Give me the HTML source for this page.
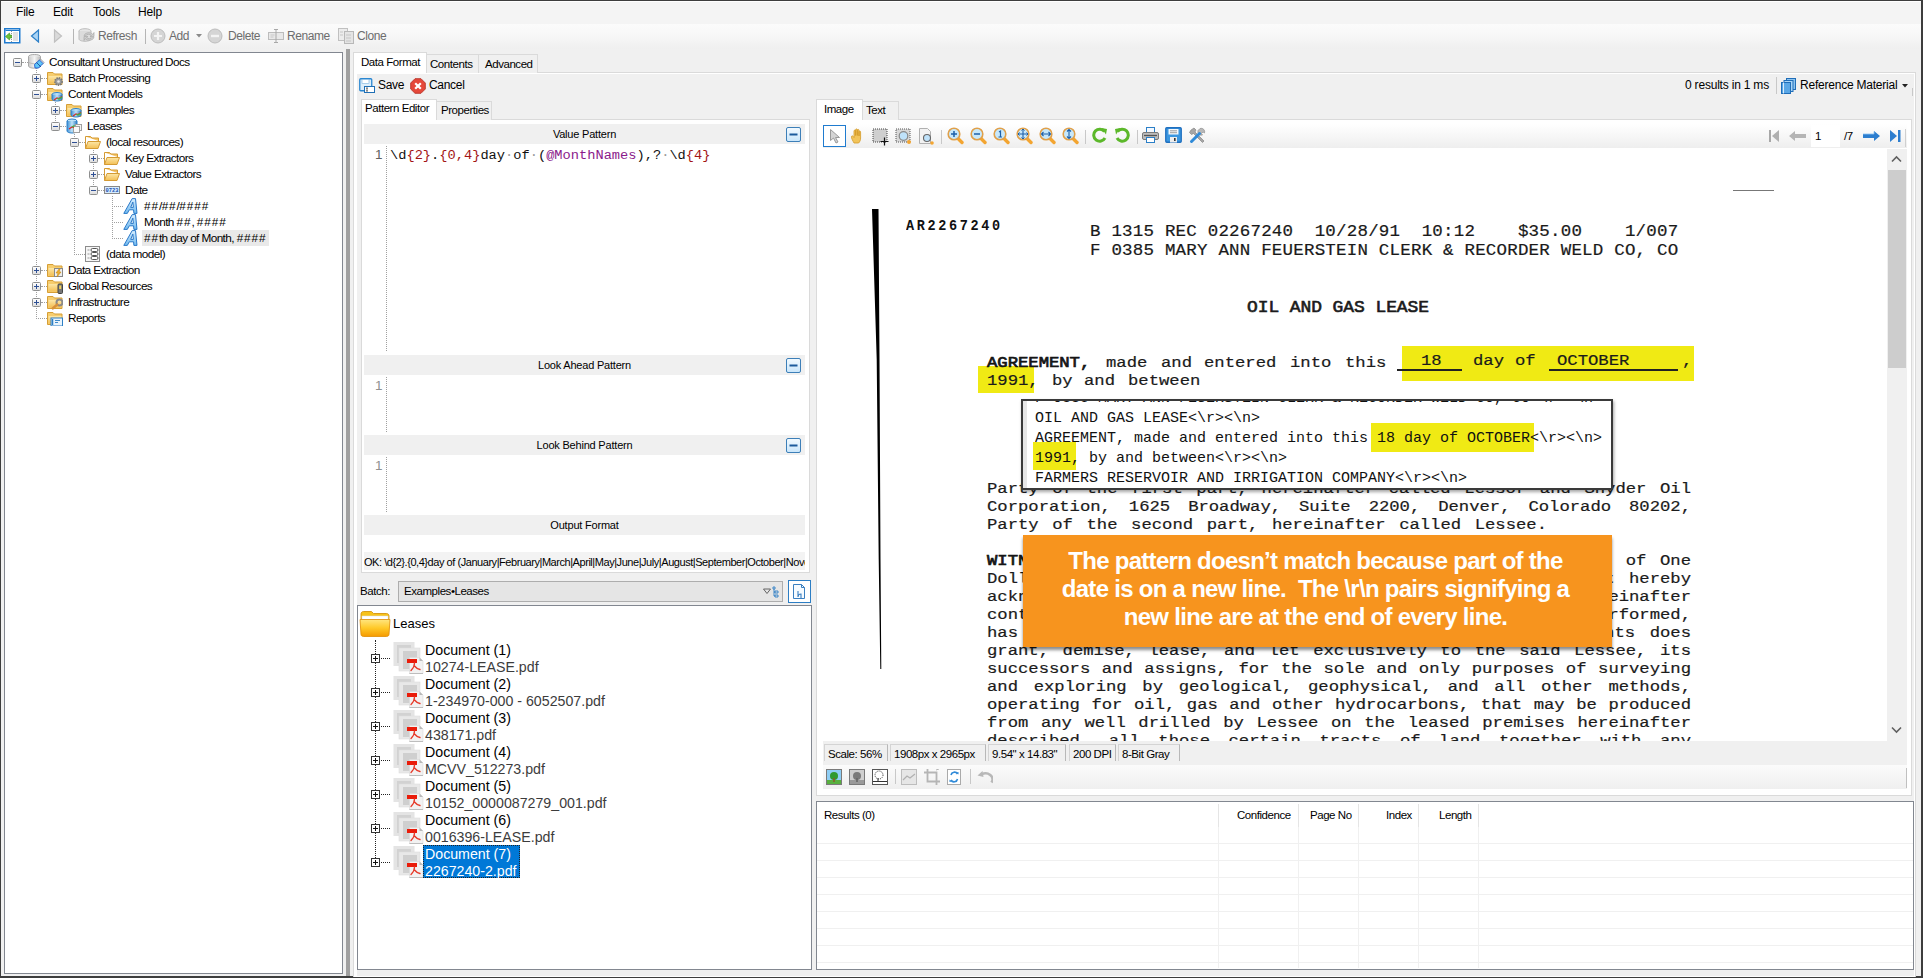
<!DOCTYPE html><html><head><meta charset="utf-8"><style>
*{box-sizing:border-box;margin:0;padding:0}
html,body{width:1923px;height:978px;overflow:hidden;background:#f0f0f0;font-family:"Liberation Sans",sans-serif;font-size:11px;color:#000}
.a{position:absolute}
.t{position:absolute;white-space:nowrap;line-height:14px}
.menu{font-size:12px;letter-spacing:-0.2px}
.tbt{font-size:12px;color:#6d6d6d;letter-spacing:-0.45px}
.ui{font-size:11.5px;letter-spacing:-0.45px}
.tree{font-size:11.8px;letter-spacing:-0.6px}
.hdr{position:absolute;background:#f0f0f0;text-align:center;font-size:11px;line-height:20px;letter-spacing:-0.2px}
.mono{font-family:"Liberation Mono",monospace}
.vd{position:absolute;width:1px;border-left:1px dotted #a0a0a0}
.hd{position:absolute;height:1px;border-top:1px dotted #a0a0a0}
.doc{font-family:"Liberation Mono",monospace;font-size:17.5px;line-height:18px;color:#111;font-weight:bold;position:absolute;white-space:nowrap;-webkit-text-stroke:0px}
b2{-webkit-text-stroke:0.7px #111}
.docl{position:absolute;font-family:"Liberation Mono",monospace;font-size:17.5px;line-height:18px;color:#1a1a1a;font-weight:bold;text-align:justify;text-align-last:justify;white-space:normal;height:18px;overflow:visible}
</style></head><body>

<svg width="0" height="0" style="position:absolute">
<defs>
<linearGradient id="gbox" x1="0" y1="0" x2="0" y2="1"><stop offset="0" stop-color="#ffffff"/><stop offset="1" stop-color="#dcdcdc"/></linearGradient>
<linearGradient id="gfold" x1="0" y1="0" x2="0" y2="1"><stop offset="0" stop-color="#fde7a6"/><stop offset="1" stop-color="#f3bf55"/></linearGradient>
<linearGradient id="gdb" x1="0" y1="0" x2="1" y2="0"><stop offset="0" stop-color="#c8c8c8"/><stop offset=".5" stop-color="#f4f4f4"/><stop offset="1" stop-color="#b8b8b8"/></linearGradient>
<linearGradient id="gbdb" x1="0" y1="0" x2="1" y2="0"><stop offset="0" stop-color="#3d8fd6"/><stop offset=".5" stop-color="#bfe3f8"/><stop offset="1" stop-color="#2c7cc4"/></linearGradient>
<symbol id="i-fold" viewBox="0 0 16 16"><path d="M0.5 2.5h5.5l1.5 1.5h7.5v10.5h-14.5z" fill="#f6cd6e" stroke="#d69e35"/><path d="M1.5 6h13v7.5h-13z" fill="url(#gfold)"/></symbol>
<symbol id="i-fopen" viewBox="0 0 16 16"><path d="M0.5 2.5h5l1.5 1.5h6.5v3" fill="#f5c466" stroke="#d49b34"/><path d="M0.5 14.5V2.5" stroke="#d49b34"/><path d="M0.5 14.5L3 7.5h12.5l-2.5 7z" fill="url(#gfold)" stroke="#d49b34"/></symbol>
<symbol id="i-db" viewBox="0 0 18 18"><ellipse cx="6.5" cy="2.5" rx="6" ry="2" fill="#eaeaea" stroke="#a8a8a8"/><path d="M.5 2.5v9.5c0 1.2 2.7 2.2 6 2.2s6-1 6-2.2V2.5" fill="url(#gdb)" stroke="#a8a8a8"/><path d="M.5 7.5c0 1.2 2.7 2.2 6 2.2s6-1 6-2.2" fill="none" stroke="#b8b8b8"/><path d="M10.5 7l2-2 3.5 3.5-2 2z" fill="#e0e0e0" stroke="#8a8a8a" stroke-width=".8"/><path d="M6.5 10.5l5-4.5 3.5 3.5-4.5 4.5H7z" fill="#5fc6f7" stroke="#1f58d0" stroke-width=".9"/><path d="M8.5 8.5l4.5 4.5" stroke="#1d4a9a" stroke-width=".9"/></symbol>
<symbol id="i-fgear" viewBox="0 0 16 16"><use href="#i-fold"/><circle cx="11.5" cy="11.5" r="3.6" fill="#9b9b9b" stroke="#777" stroke-dasharray="1.5 .9" stroke-width="1.6"/><circle cx="11.5" cy="11.5" r="1.3" fill="#e8e8e8"/></symbol>
<symbol id="i-fdb" viewBox="0 0 16 16"><use href="#i-fold"/><ellipse cx="10" cy="8.5" rx="5" ry="2" fill="#bfe3f8" stroke="#2b7fc7"/><path d="M5 8.5v4.5c0 1.2 2.2 2 5 2s5-.8 5-2v-4.5" fill="url(#gbdb)" stroke="#2b7fc7"/><path d="M7 14l3-2 2 .5 3-2" stroke="#d62c2c" stroke-width="1.2" fill="none"/><path d="M10 12.5l2 .5 3-2" stroke="#3fb33f" stroke-width="1.2" fill="none"/></symbol>
<symbol id="i-leases" viewBox="0 0 16 16"><ellipse cx="6" cy="3" rx="5" ry="2" fill="#bfe3f8" stroke="#2b7fc7"/><path d="M1 3v10c0 1.2 2.2 2 5 2s5-.8 5-2V3" fill="url(#gbdb)" stroke="#2b7fc7"/><rect x="9.5" y="6.5" width="6" height="6" fill="#f4f4f4" stroke="#a0a0a0"/><rect x="7.5" y="8.5" width="6" height="6" fill="#fafafa" stroke="#a0a0a0"/><path d="M3 11l3-2 2 .5" stroke="#d62c2c" stroke-width="1.2" fill="none"/><path d="M6 9l2.5-1.5" stroke="#3fb33f" stroke-width="1.2" fill="none"/></symbol>
<symbol id="i-date" viewBox="0 0 16 8"><rect x=".5" y=".5" width="15" height="7" fill="#d6ecff" stroke="#888"/><text x="8" y="6.3" font-family="Liberation Mono" font-size="6" font-weight="bold" fill="#1a4fb0" text-anchor="middle" textLength="13" lengthAdjust="spacingAndGlyphs">0723</text></symbol>
<linearGradient id="gA" x1="0" y1="0" x2="0" y2="1"><stop offset="0" stop-color="#d9efff"/><stop offset="1" stop-color="#6fb9ef"/></linearGradient><symbol id="i-A" viewBox="0 0 16 16"><path d="M.8 15.4L9.2.6h3.3l1.5 14.8h-3.1l-.35-3.6H6.3l-2 3.6z M7.7 9.4h2.7l-.55-5.3z" fill="url(#gA)" stroke="#2a78c8" stroke-width="1" fill-rule="evenodd" stroke-linejoin="round"/></symbol>
<symbol id="i-dm" viewBox="0 0 16 16"><rect x=".5" y=".5" width="14" height="15" fill="#f6f6f6" stroke="#8c8c8c"/><path d="M2.5 4h2M2.5 8h2M2.5 12h2" stroke="#999"/><rect x="6" y="2.5" width="7" height="3" rx="1.5" fill="#fff" stroke="#555"/><rect x="6" y="6.5" width="7" height="3" rx="1.5" fill="#fff" stroke="#555"/><rect x="6" y="10.5" width="7" height="3" rx="1.5" fill="#fff" stroke="#555"/></symbol>
<symbol id="i-flight" viewBox="0 0 16 16"><use href="#i-fold"/><rect x="7.5" y="6.5" width="8" height="8" fill="#eee" stroke="#888"/><path d="M12 7l-3 4h2l-1 4 4-5h-2l1-3z" fill="#f0b030" stroke="#c78a10" stroke-width=".6"/></symbol>
<symbol id="i-flock" viewBox="0 0 16 16"><use href="#i-fold"/><rect x="11" y="6" width="4.5" height="9.5" rx="1" fill="#777" stroke="#444"/><rect x="12.2" y="7.5" width="2" height="3.5" fill="#f3d35a"/></symbol>
<symbol id="i-fwrench" viewBox="0 0 16 16"><use href="#i-fold"/><circle cx="12.5" cy="8.5" r="3" fill="none" stroke="#8a8a8a" stroke-width="2"/><path d="M11 10l-6 5" stroke="#d9913a" stroke-width="2.4"/></symbol>
<symbol id="i-frep" viewBox="0 0 16 16"><use href="#i-fold"/><rect x="4" y="8" width="11.5" height="8" fill="#e9f4fc" stroke="#2d7fc5"/><path d="M5.5 9v6" stroke="#2d7fc5" stroke-width="1.5"/><path d="M8 10.5h5M8 12.5h3" stroke="#2d7fc5" stroke-width=".9"/></symbol>
<symbol id="i-minus" viewBox="0 0 9 9"><rect x=".5" y=".5" width="8" height="8" rx="1" fill="url(#gbox)" stroke="#8e8f8f"/><path d="M2 4.5h5" stroke="#2e4f94"/></symbol>
<symbol id="i-plus" viewBox="0 0 9 9"><rect x=".5" y=".5" width="8" height="8" rx="1" fill="url(#gbox)" stroke="#8e8f8f"/><path d="M2 4.5h5M4.5 2v5" stroke="#2e4f94"/></symbol>
<symbol id="i-docpdf" viewBox="0 0 31 33"><rect x="0.5" y="1" width="21" height="24" fill="#e4e4e4"/><rect x="4" y="4" width="14" height="18" fill="#d2d2d2"/><rect x="6" y="7" width="21" height="23" fill="#e8e8e8" stroke="#dcdcdc" stroke-width=".6"/><rect x="10" y="10" width="14" height="18" fill="#cfcfcf"/><path d="M16.5 16.5h10l3.5 3.5v12.5h-13.5z" fill="#f2f2f2" stroke="#d8d8d8" stroke-width=".6"/><path d="M26.5 16.5v3.5h3.5z" fill="#b8b8b8"/><path d="M16.5 32.5h13.5" stroke="#bdbdbd"/><rect x="14" y="18" width="10" height="4" fill="#ea1c0a"/><path d="M21.5 22c0 3-1.5 5.5-3.5 7.5M21.5 25c1.5 2 3.5 3 5.5 3.5" stroke="#e63a2a" stroke-width="1.3" fill="none" stroke-linecap="round"/></symbol>
<linearGradient id="gbf" x1="0" y1="0" x2="0" y2="1"><stop offset="0" stop-color="#ffe680"/><stop offset=".5" stop-color="#ffc928"/><stop offset="1" stop-color="#f59a00"/></linearGradient><symbol id="i-bigfolder" viewBox="0 0 32 28"><path d="M2 4c0-1.5 1-2.5 2.5-2.5h8l2 2h13c1.5 0 2.5 1 2.5 2.5v3H2z" fill="#f7c21a" stroke="#d08a00" stroke-width=".8"/><rect x="3" y="6" width="26" height="4" fill="#fff" stroke="#ddd" stroke-width=".5"/><path d="M1 9.5h30l-1 15c0 1-1 2-2.5 2h-23c-1.5 0-2.5-1-2.5-2z" fill="url(#gbf)" stroke="#e08c00" stroke-width=".8"/></symbol>
</defs></svg>

<div class="a" style="left:0px;top:0px;width:1923px;height:1px;background:#3d3d3d"></div>
<div class="a" style="left:0px;top:0px;width:1px;height:978px;background:#3d3d3d"></div>
<div class="a" style="left:1921px;top:0px;width:2px;height:978px;background:#3d3d3d"></div>
<div class="a" style="left:0px;top:976px;width:1923px;height:2px;background:#3d3d3d"></div>
<div class="a" style="left:1px;top:1px;width:1920px;height:23px;background:#f4f4f4;border-top:1px solid #fff"></div>
<div class="t menu" style="left:16px;top:5px;">File</div>
<div class="t menu" style="left:53px;top:5px;">Edit</div>
<div class="t menu" style="left:93px;top:5px;">Tools</div>
<div class="t menu" style="left:138px;top:5px;">Help</div>
<div class="a" style="left:1px;top:24px;width:1920px;height:25px;background:linear-gradient(#fbfbfb,#f8f8f8 40%,#f2f2f2 80%,#efefef)"></div>
<div class="t tbt" style="left:98px;top:29px;">Refresh</div>
<div class="t tbt" style="left:169px;top:29px;">Add</div>
<div class="t tbt" style="left:228px;top:29px;">Delete</div>
<div class="t tbt" style="left:287px;top:29px;">Rename</div>
<div class="t tbt" style="left:357px;top:29px;">Clone</div>
<div class="a" style="left:73px;top:29px;width:1px;height:15px;background:#b5b5b5"></div>
<div class="a" style="left:145px;top:29px;width:1px;height:15px;background:#b5b5b5"></div>
<svg class="a" style="left:4px;top:28px" width="17" height="16"><rect x=".75" y=".75" width="15" height="14" fill="#fff" stroke="#1f7bcf" stroke-width="1.5"/><path d="M1.5 2.5h14" stroke="#1f7bcf"/><path d="M7.5 3v11" stroke="#999" stroke-dasharray="1 1"/><rect x="9" y="4" width="5" height="9" fill="#e2e2e2"/><path d="M1.5 8.5l4-3.5v2h2v3h-2v2z" fill="#6cc43a" stroke="#3a8f1a" stroke-width=".6"/></svg>
<svg class="a" style="left:30px;top:29px" width="10" height="14"><path d="M8.5 1v12L1.5 7z" fill="#aad4f5" stroke="#2c7fc7" stroke-width="1.2"/></svg>
<svg class="a" style="left:53px;top:29px" width="10" height="14"><path d="M1.5 1v12L8.5 7z" fill="#dadada" stroke="#c0c0c0" stroke-width="1.2"/></svg>
<svg class="a" style="left:78px;top:28px" width="17" height="15"><ellipse cx="7" cy="3" rx="6" ry="2.3" fill="#e6e6e6" stroke="#bdbdbd"/><path d="M1 3v8c0 1.3 2.7 2.3 6 2.3s6-1 6-2.3V3" fill="#dcdcdc" stroke="#bdbdbd"/><path d="M6 7.5a5 4 0 0 1 9-1l1-2v4h-4l1.5-1a3.5 3 0 0 0-6 .5zM16 9.5a5 4 0 0 1-9 1l-1 2v-4h4l-1.5 1a3.5 3 0 0 0 6-.5z" fill="#cfcfcf" stroke="#aaa" stroke-width=".7"/></svg>
<svg class="a" style="left:150px;top:28px" width="16" height="16"><circle cx="8" cy="8" r="7" fill="#d5d5d5" stroke="#bdbdbd"/><path d="M8 4v8M4 8h8" stroke="#f4f4f4" stroke-width="2.2"/></svg>
<svg class="a" style="left:196px;top:34px" width="7" height="4"><path d="M0 0h6l-3 3.5z" fill="#8a8a8a"/></svg>
<svg class="a" style="left:207px;top:28px" width="16" height="16"><circle cx="8" cy="8" r="7" fill="#d5d5d5" stroke="#bdbdbd"/><path d="M4 8h8" stroke="#f4f4f4" stroke-width="2.4"/></svg>
<svg class="a" style="left:268px;top:29px" width="16" height="14"><rect x=".5" y="3.5" width="15" height="7" fill="#e8e8e8" stroke="#bcbcbc"/><path d="M8 .5v13M6 .5h4M6 13.5h4" stroke="#a8a8a8"/><path d="M2.5 6h4M2.5 8h3" stroke="#c8c8c8"/></svg>
<svg class="a" style="left:338px;top:28px" width="16" height="16"><rect x=".5" y=".5" width="9" height="12" fill="#ececec" stroke="#c0c0c0"/><rect x="6.5" y="3.5" width="9" height="12" fill="#e4e4e4" stroke="#b8b8b8"/><path d="M2 4h3M2 7h3M8 7h5M8 10h5M8 13h5" stroke="#c6c6c6"/></svg>
<div class="a" style="left:4px;top:52px;width:339px;height:922px;background:#fff;border:1px solid #828790"></div>
<div class="a" style="left:346px;top:49px;width:4px;height:927px;background:#a0a0a0"></div>
<div class="a" style="left:353px;top:72px;width:1563px;height:905px;background:#fff;border:1px solid #dadada;border-bottom:none"></div>
<div class="a" style="left:353px;top:52px;width:74px;height:21px;background:#fff;border:1px solid #dadada;border-bottom:none"></div>
<div class="a" style="left:426px;top:54px;width:53px;height:19px;background:#f0f0f0;border:1px solid #dadada;border-bottom:none"></div>
<div class="a" style="left:478px;top:54px;width:60px;height:19px;background:#f0f0f0;border:1px solid #dadada;border-bottom:none"></div>
<div class="a" style="left:354px;top:72px;width:72px;height:2px;background:#fff"></div>
<div class="t ui" style="left:361px;top:55px;">Data Format</div>
<div class="t ui" style="left:430px;top:57px;">Contents</div>
<div class="t ui" style="left:485px;top:57px;">Advanced</div>
<div class="a" style="left:357px;top:74px;width:1557px;height:902px;background:#f0f0f0"></div>
<svg class="a" style="left:359px;top:78px" width="16" height="15"><rect x=".75" y=".75" width="12" height="12" rx="1" fill="#ddeefa" stroke="#2b87d1" stroke-width="1.3"/><rect x="3" y="1.5" width="7" height="4" fill="#fff" stroke="#7bb2e0" stroke-width=".6"/><rect x="5.5" y="8.5" width="10" height="6" fill="#fff" stroke="#1f6fb5"/><path d="M8 10v3M7 10h2M7 13h2" stroke="#333" stroke-width=".7"/></svg>
<div class="t ui" style="left:378px;top:78px;font-size:12px;letter-spacing:-0.3px">Save</div>
<svg class="a" style="left:410px;top:78px" width="16" height="16"><path d="M5 .7h6l4.3 4.3v6L11 15.3H5L.7 11V5z" fill="#e5483a" stroke="#b8342a" stroke-width=".9"/><path d="M5.2 5.2l5.6 5.6M10.8 5.2l-5.6 5.6" stroke="#fff" stroke-width="2.2"/></svg>
<div class="t ui" style="left:429px;top:78px;font-size:12px;letter-spacing:-0.3px">Cancel</div>
<div class="a" style="left:361px;top:119px;width:449px;height:454px;background:#fff;border:1px solid #dadada"></div>
<div class="a" style="left:361px;top:99px;width:76px;height:21px;background:#fff;border:1px solid #dadada;border-bottom:none"></div>
<div class="a" style="left:436px;top:101px;width:56px;height:19px;background:#f0f0f0;border:1px solid #dadada;border-bottom:none"></div>
<div class="a" style="left:362px;top:118px;width:74px;height:2px;background:#fff"></div>
<div class="t ui" style="left:365px;top:101px;">Pattern Editor</div>
<div class="t ui" style="left:441px;top:103px;">Properties</div>
<div class="hdr" style="left:364px;top:124px;width:441px;height:20px">Value Pattern</div>
<svg class="a" style="left:786px;top:127px" width="15" height="15"><defs><linearGradient id="gc786127" x1="0" y1="0" x2="0" y2="1"><stop offset="0" stop-color="#f3faff"/><stop offset="1" stop-color="#c9e6fb"/></linearGradient></defs><rect x=".5" y=".5" width="14" height="14" rx="1.5" fill="url(#gc786127)" stroke="#3d7fb8"/><path d="M3.5 7.5h8" stroke="#1c5b9c" stroke-width="2"/></svg>
<div class="hdr" style="left:364px;top:355px;width:441px;height:20px">Look Ahead Pattern</div>
<svg class="a" style="left:786px;top:358px" width="15" height="15"><defs><linearGradient id="gc786358" x1="0" y1="0" x2="0" y2="1"><stop offset="0" stop-color="#f3faff"/><stop offset="1" stop-color="#c9e6fb"/></linearGradient></defs><rect x=".5" y=".5" width="14" height="14" rx="1.5" fill="url(#gc786358)" stroke="#3d7fb8"/><path d="M3.5 7.5h8" stroke="#1c5b9c" stroke-width="2"/></svg>
<div class="hdr" style="left:364px;top:435px;width:441px;height:20px">Look Behind Pattern</div>
<svg class="a" style="left:786px;top:438px" width="15" height="15"><defs><linearGradient id="gc786438" x1="0" y1="0" x2="0" y2="1"><stop offset="0" stop-color="#f3faff"/><stop offset="1" stop-color="#c9e6fb"/></linearGradient></defs><rect x=".5" y=".5" width="14" height="14" rx="1.5" fill="url(#gc786438)" stroke="#3d7fb8"/><path d="M3.5 7.5h8" stroke="#1c5b9c" stroke-width="2"/></svg>
<div class="hdr" style="left:364px;top:515px;width:441px;height:20px">Output Format</div>
<div class="vd" style="left:386px;top:146px;height:205px"></div>
<div class="vd" style="left:386px;top:377px;height:55px"></div>
<div class="vd" style="left:386px;top:457px;height:55px"></div>
<div class="t" style="left:375px;top:147px;font-size:13.5px;line-height:16px;color:#606060">1</div>
<div class="t" style="left:375px;top:378px;font-size:13.5px;line-height:16px;color:#909090">1</div>
<div class="t" style="left:375px;top:458px;font-size:13.5px;line-height:16px;color:#909090">1</div>
<div class="t mono" style="left:390px;top:148px;font-size:13.7px;line-height:16px;color:#111">\d<span style="color:#a31515">{2}</span>.<span style="color:#a31515">{0,4}</span>day<span style="color:#9a9a9a">·</span>of<span style="color:#9a9a9a">·</span>(<span style="color:#8b1a8b">@MonthNames</span>),?<span style="color:#9a9a9a">·</span>\d<span style="color:#a31515">{4}</span></div>
<div class="a" style="left:364px;top:552px;width:441px;height:18px;background:#f3f3f3"></div>
<div class="t" style="left:364px;top:555px;font-size:11px;letter-spacing:-0.45px;width:441px;overflow:hidden">OK: \d{2}.{0,4}day of (January|February|March|April|May|June|July|August|September|October|November|December),?\s\d{4}</div>
<div class="t ui" style="left:360px;top:584px;">Batch:</div>
<div class="a" style="left:398px;top:581px;width:385px;height:21px;background:#e5e5e5;border:1px solid #adadad"></div>
<div class="t ui" style="left:404px;top:584px;">Examples•Leases</div>
<svg class="a" style="left:763px;top:586px" width="18" height="12"><path d="M.5 3h7l-3.5 4.5z" fill="none" stroke="#555" stroke-width=".9"/><path d="M10 1h2v2h-2zM12 5h3v2h-3zM12 9h3v2h-3zM11 3v7h1M11 6h1" fill="none" stroke="#2d7ec4" stroke-width=".9"/></svg>
<div class="a" style="left:788px;top:580px;width:23px;height:23px;background:#fff;border:1px solid #2d7ec4"></div>
<svg class="a" style="left:792px;top:583px" width="15" height="17"><path d="M1.5 1.5h8l3 3v11h-11z" fill="#f6fbff" stroke="#3a7fc0"/><path d="M9.5 1.5v3h3" fill="none" stroke="#3a7fc0"/><path d="M6 8v6M6 14c0-2 1-3 3-3v4" fill="none" stroke="#3a7fc0" stroke-width="1.1"/></svg>
<div class="a" style="left:357px;top:605px;width:455px;height:365px;background:#fff;border:1px solid #828790"></div>
<svg class="a" style="left:359px;top:610px" width="32" height="28"><use href="#i-bigfolder"/></svg>
<div class="t" style="left:393px;top:617px;font-size:13px;color:#000;letter-spacing:0px">Leases</div>
<div class="vd" style="left:375px;top:640px;height:222px;border-left-color:#222"></div>
<svg class="a" style="left:371px;top:654px" width="9" height="9"><rect x=".5" y=".5" width="8" height="8" fill="#fff" stroke="#333"/><path d="M2 4.5h5M4.5 2v5" stroke="#111"/></svg>
<div class="hd" style="left:381px;top:658px;width:9px;border-top-color:#222"></div>
<svg class="a" style="left:393px;top:641px" width="31" height="33"><use href="#i-docpdf"/></svg>
<div class="t" style="left:425px;top:642px;font-size:14.2px;line-height:17px;color:#000">Document (1)</div>
<div class="t" style="left:425px;top:659px;font-size:14.2px;line-height:17px;color:#3c3c3c">10274-LEASE.pdf</div>
<svg class="a" style="left:371px;top:688px" width="9" height="9"><rect x=".5" y=".5" width="8" height="8" fill="#fff" stroke="#333"/><path d="M2 4.5h5M4.5 2v5" stroke="#111"/></svg>
<div class="hd" style="left:381px;top:692px;width:9px;border-top-color:#222"></div>
<svg class="a" style="left:393px;top:675px" width="31" height="33"><use href="#i-docpdf"/></svg>
<div class="t" style="left:425px;top:676px;font-size:14.2px;line-height:17px;color:#000">Document (2)</div>
<div class="t" style="left:425px;top:693px;font-size:14.2px;line-height:17px;color:#3c3c3c">1-234970-000 - 6052507.pdf</div>
<svg class="a" style="left:371px;top:722px" width="9" height="9"><rect x=".5" y=".5" width="8" height="8" fill="#fff" stroke="#333"/><path d="M2 4.5h5M4.5 2v5" stroke="#111"/></svg>
<div class="hd" style="left:381px;top:726px;width:9px;border-top-color:#222"></div>
<svg class="a" style="left:393px;top:709px" width="31" height="33"><use href="#i-docpdf"/></svg>
<div class="t" style="left:425px;top:710px;font-size:14.2px;line-height:17px;color:#000">Document (3)</div>
<div class="t" style="left:425px;top:727px;font-size:14.2px;line-height:17px;color:#3c3c3c">438171.pdf</div>
<svg class="a" style="left:371px;top:756px" width="9" height="9"><rect x=".5" y=".5" width="8" height="8" fill="#fff" stroke="#333"/><path d="M2 4.5h5M4.5 2v5" stroke="#111"/></svg>
<div class="hd" style="left:381px;top:760px;width:9px;border-top-color:#222"></div>
<svg class="a" style="left:393px;top:743px" width="31" height="33"><use href="#i-docpdf"/></svg>
<div class="t" style="left:425px;top:744px;font-size:14.2px;line-height:17px;color:#000">Document (4)</div>
<div class="t" style="left:425px;top:761px;font-size:14.2px;line-height:17px;color:#3c3c3c">MCVV_512273.pdf</div>
<svg class="a" style="left:371px;top:790px" width="9" height="9"><rect x=".5" y=".5" width="8" height="8" fill="#fff" stroke="#333"/><path d="M2 4.5h5M4.5 2v5" stroke="#111"/></svg>
<div class="hd" style="left:381px;top:794px;width:9px;border-top-color:#222"></div>
<svg class="a" style="left:393px;top:777px" width="31" height="33"><use href="#i-docpdf"/></svg>
<div class="t" style="left:425px;top:778px;font-size:14.2px;line-height:17px;color:#000">Document (5)</div>
<div class="t" style="left:425px;top:795px;font-size:14.2px;line-height:17px;color:#3c3c3c">10152_0000087279_001.pdf</div>
<svg class="a" style="left:371px;top:824px" width="9" height="9"><rect x=".5" y=".5" width="8" height="8" fill="#fff" stroke="#333"/><path d="M2 4.5h5M4.5 2v5" stroke="#111"/></svg>
<div class="hd" style="left:381px;top:828px;width:9px;border-top-color:#222"></div>
<svg class="a" style="left:393px;top:811px" width="31" height="33"><use href="#i-docpdf"/></svg>
<div class="t" style="left:425px;top:812px;font-size:14.2px;line-height:17px;color:#000">Document (6)</div>
<div class="t" style="left:425px;top:829px;font-size:14.2px;line-height:17px;color:#3c3c3c">0016396-LEASE.pdf</div>
<svg class="a" style="left:371px;top:858px" width="9" height="9"><rect x=".5" y=".5" width="8" height="8" fill="#fff" stroke="#333"/><path d="M2 4.5h5M4.5 2v5" stroke="#111"/></svg>
<div class="hd" style="left:381px;top:862px;width:9px;border-top-color:#222"></div>
<svg class="a" style="left:393px;top:845px" width="31" height="33"><use href="#i-docpdf"/></svg>
<div class="a" style="left:423px;top:845px;width:97px;height:33px;background:#0078d7;border:1px dotted #222"></div>
<div class="t" style="left:425px;top:846px;font-size:14.2px;line-height:17px;color:#fff">Document (7)</div>
<div class="t" style="left:425px;top:863px;font-size:14.2px;line-height:17px;color:#fff">2267240-2.pdf</div>
<div class="t ui" style="left:1685px;top:78px;font-size:12px;letter-spacing:-0.2px">0 results in 1 ms</div>
<div class="a" style="left:1776px;top:77px;width:1px;height:17px;background:#c8c8c8"></div>
<svg class="a" style="left:1781px;top:78px" width="16" height="16"><rect x="5.5" y=".5" width="9" height="11" fill="#8cc4f0" stroke="#1f6db8"/><rect x="3" y="2.5" width="9" height="11" fill="#a9d5f7" stroke="#1f6db8"/><rect x=".5" y="4.5" width="9" height="11" fill="#5aa7e6" stroke="#1f6db8"/><path d="M2.5 4.5v11" stroke="#fff" stroke-width=".8"/></svg>
<div class="t ui" style="left:1800px;top:78px;font-size:12px;letter-spacing:-0.22px">Reference Material</div>
<svg class="a" style="left:1902px;top:84px" width="7" height="4"><path d="M0 0h6l-3 3.5z" fill="#222"/></svg>
<div class="a" style="left:1912px;top:88px;width:1px;height:8px;background:#c8c8c8"></div>
<div class="a" style="left:816px;top:119px;width:1096px;height:677px;background:#fff;border:1px solid #dadada"></div>
<div class="a" style="left:816px;top:99px;width:47px;height:21px;background:#fff;border:1px solid #dadada;border-bottom:none"></div>
<div class="a" style="left:862px;top:101px;width:37px;height:19px;background:#f0f0f0;border:1px solid #dadada;border-bottom:none"></div>
<div class="a" style="left:817px;top:118px;width:45px;height:2px;background:#fff"></div>
<div class="t ui" style="left:824px;top:102px;">Image</div>
<div class="t ui" style="left:866px;top:103px;">Text</div>
<div class="a" style="left:823px;top:124px;width:1084px;height:24px;background:linear-gradient(#ffffff,#f5f5f5 60%,#eeeeee)"></div>
<div class="a" style="left:823px;top:125px;width:23px;height:22px;background:#fff;border:1px solid #1f7bcf"></div>
<svg class="a" style="left:828px;top:128px" width="14" height="16"><path d="M2.5 1.5v11l3-2.5 2.5 5 2-1-2.5-4.5h4z" fill="#d4d4d4" stroke="#9a9a9a"/></svg>
<svg class="a" style="left:851px;top:128px" width="13" height="16"><path d="M3 15c-1-2-3-5-2.5-6.5s2 0 2.5 1V3c0-1.2 1.6-1.2 1.6 0v4.5V1.8c0-1.2 1.7-1.2 1.7 0v5.7V2.3c0-1.2 1.7-1.2 1.7 0V8V4c0-1.2 1.6-1.2 1.6 0v6c0 2.5-1 4-2 5z" fill="#f2c45a" stroke="#d39a2a" stroke-width=".8"/></svg>
<svg class="a" style="left:872px;top:128px" width="18" height="18"><rect x="1" y="1" width="14" height="13" fill="#cfcfcf" stroke="#444" stroke-dasharray="1 1"/><path d="M12.5 9.5v8M8.5 13.5h8" stroke="#111" stroke-width="1.2"/></svg>
<svg class="a" style="left:895px;top:128px" width="17" height="17"><rect x="1" y="1" width="14" height="13" fill="#d8d8d8" stroke="#555" stroke-dasharray="1 1"/><circle cx="8.5" cy="8" r="4.3" fill="#bfe2fa" stroke="#888" stroke-width="1.2"/><circle cx="14" cy="14" r="2" fill="#f3a531"/></svg>
<svg class="a" style="left:918px;top:128px" width="17" height="17"><path d="M1.5 .5h8l3 3v12h-11z" fill="#f2f2f2" stroke="#b0b0b0"/><circle cx="9" cy="10" r="3.5" fill="#bfe2fa" stroke="#666" stroke-width="1.1"/><circle cx="14" cy="15" r="1.8" fill="#f3a531"/></svg>
<div class="a" style="left:941px;top:130px;width:1px;height:14px;background:#c8c8c8"></div>
<svg class="a" style="left:947px;top:127px" width="17" height="18"><path d="M10.5 11l4.5 4.5" stroke="#f3a531" stroke-width="3.4" stroke-linecap="round"/><circle cx="7" cy="7" r="5.8" fill="#c7e8fb" stroke="#e0a04a" stroke-width="1.6"/><path d="M4 7h6M7 4v6" stroke="#1d5fa8" stroke-width="1.5"/></svg>
<svg class="a" style="left:970px;top:127px" width="17" height="18"><path d="M10.5 11l4.5 4.5" stroke="#f3a531" stroke-width="3.4" stroke-linecap="round"/><circle cx="7" cy="7" r="5.8" fill="#c7e8fb" stroke="#e0a04a" stroke-width="1.6"/><path d="M4 7h6" stroke="#1d5fa8" stroke-width="1.5"/></svg>
<svg class="a" style="left:993px;top:127px" width="17" height="18"><path d="M10.5 11l4.5 4.5" stroke="#f3a531" stroke-width="3.4" stroke-linecap="round"/><circle cx="7" cy="7" r="5.8" fill="#c7e8fb" stroke="#e0a04a" stroke-width="1.6"/><path d="M6 5l1.5-1v6M5.5 10h3.5" stroke="#1d5fa8" stroke-width="1.2" fill="none"/></svg>
<svg class="a" style="left:1016px;top:127px" width="17" height="18"><path d="M10.5 11l4.5 4.5" stroke="#f3a531" stroke-width="3.4" stroke-linecap="round"/><circle cx="7" cy="7" r="5.8" fill="#c7e8fb" stroke="#e0a04a" stroke-width="1.6"/><path d="M7 2.5v9M2.5 7h9" stroke="#1d5fa8" stroke-width="1.1"/><path d="M5.5 3.5L7 2l1.5 1.5M5.5 10.5L7 12l1.5-1.5M3.5 5.5L2 7l1.5 1.5M10.5 5.5L12 7l-1.5 1.5" stroke="#1d5fa8" fill="none"/></svg>
<svg class="a" style="left:1039px;top:127px" width="17" height="18"><path d="M10.5 11l4.5 4.5" stroke="#f3a531" stroke-width="3.4" stroke-linecap="round"/><circle cx="7" cy="7" r="5.8" fill="#c7e8fb" stroke="#e0a04a" stroke-width="1.6"/><path d="M2.5 7h9M4.5 5L2.5 7l2 2M9.5 5l2 2-2 2" stroke="#1d5fa8" stroke-width="1.1" fill="none"/></svg>
<svg class="a" style="left:1062px;top:127px" width="17" height="18"><path d="M10.5 11l4.5 4.5" stroke="#f3a531" stroke-width="3.4" stroke-linecap="round"/><circle cx="7" cy="7" r="5.8" fill="#c7e8fb" stroke="#e0a04a" stroke-width="1.6"/><path d="M7 2.5v9M5 4.5L7 2.5l2 2M5 9.5l2 2 2-2" stroke="#1d5fa8" stroke-width="1.1" fill="none"/></svg>
<div class="a" style="left:1085px;top:130px;width:1px;height:14px;background:#c8c8c8"></div>
<svg class="a" style="left:1092px;top:127px" width="16" height="16"><path d="M12.5 4.5A6 6 0 1 0 13 11" fill="none" stroke="#5cb82a" stroke-width="3"/><path d="M9.5 1l5.5 1-1 5.5z" fill="#5cb82a"/></svg>
<svg class="a" style="left:1114px;top:127px" width="16" height="16"><path d="M3.5 4.5A6 6 0 1 1 3 11" fill="none" stroke="#5cb82a" stroke-width="3"/><path d="M6.5 1L1 2l1 5.5z" fill="#5cb82a"/></svg>
<div class="a" style="left:1137px;top:130px;width:1px;height:14px;background:#c8c8c8"></div>
<svg class="a" style="left:1142px;top:127px" width="17" height="16"><rect x="4.5" y=".5" width="8" height="5" fill="#f4f9ff" stroke="#2b7fc7"/><rect x=".5" y="5.5" width="16" height="7" rx="1.5" fill="#bdbdbd" stroke="#7a7a7a"/><path d="M2 8.5h13" stroke="#555" stroke-width="1.3"/><rect x="4.5" y="10.5" width="8" height="5" fill="#fff" stroke="#2b7fc7"/></svg>
<svg class="a" style="left:1165px;top:127px" width="17" height="16"><rect x=".75" y=".75" width="15.5" height="14.5" rx="1" fill="#3b97e0" stroke="#1f6fbf" stroke-width="1.3"/><rect x="3.5" y="2" width="10" height="5.5" fill="#f4f8fc"/><path d="M5 3.8h7M5 5.7h7" stroke="#888" stroke-width=".8"/><rect x="5" y="10" width="7" height="5.5" fill="#eee"/><rect x="9" y="11" width="1.6" height="3" fill="#333"/></svg>
<svg class="a" style="left:1189px;top:127px" width="17" height="17"><path d="M2 3l3-2 2 2-1 2 9 9-1.5 1.5-9-9-2 1-2-2z" fill="#a6a6a6" stroke="#7a7a7a" stroke-width=".6"/><path d="M11 1.5a3.5 3.5 0 0 1 4.5 4.5l-1.5-1-1.5 1.5 1 1.5a3.5 3.5 0 0 1-4.5-4.5z" fill="#b8b8b8" stroke="#888" stroke-width=".6"/><path d="M10.5 6.5L2.5 14.5" stroke="#2f8ad8" stroke-width="3" stroke-linecap="round"/></svg>
<svg class="a" style="left:1768px;top:129px" width="12" height="14"><rect x="1" y="1" width="2" height="12" fill="#a8a8a8"/><path d="M11 1v12L4 7z" fill="#b0b0b0"/></svg>
<svg class="a" style="left:1788px;top:130px" width="19" height="12"><path d="M1 6l6-5v3h11v4H7v3z" fill="#b5b5b5"/></svg>
<div class="a" style="left:1811px;top:125px;width:29px;height:22px;background:#fff"></div>
<div class="t ui" style="left:1815px;top:129px;">1</div>
<div class="t ui" style="left:1844px;top:129px;">/7</div>
<svg class="a" style="left:1862px;top:130px" width="19" height="12"><path d="M18 6l-6-5v3H1v4h11v3z" fill="#2d7ecf"/><path d="M1 4h11V1.5" fill="none" stroke="#8cc3f2" stroke-width=".8"/></svg>
<svg class="a" style="left:1889px;top:129px" width="12" height="14"><path d="M1 1v12l7-6z" fill="#2d7ecf"/><rect x="9" y="1" width="2.5" height="12" fill="#2d7ecf"/></svg>
<div class="a" style="left:1905px;top:129px;width:1px;height:18px;background:#d0d0d0"></div>
<div class="a" style="left:823px;top:149px;width:1064px;height:592px;background:#fff;overflow:hidden"></div>
<div class="a" style="left:1887px;top:149px;width:20px;height:592px;background:#f0f0f0"></div>
<div class="a" style="left:1888px;top:170px;width:18px;height:198px;background:#cdcdcd"></div>
<svg class="a" style="left:1891px;top:155px" width="11" height="8"><path d="M1 6.5l4.5-4.5 4.5 4.5" fill="none" stroke="#606060" stroke-width="1.6"/></svg>
<svg class="a" style="left:1891px;top:726px" width="11" height="8"><path d="M1 1.5l4.5 4.5 4.5-4.5" fill="none" stroke="#606060" stroke-width="1.6"/></svg>
<svg class="a" style="left:870px;top:208px" width="14" height="464"><path d="M2 1h6.5l1 150 1 200 .8 110h-1l-1.6-110-2-200z" fill="#000"/></svg>
<div class="a" style="left:1733px;top:190px;width:41px;height:1px;background:#777"></div>
<div class="t" style="left:906px;top:218px;font-family:'Liberation Mono',monospace;font-size:13.5px;line-height:18px;font-weight:bold;letter-spacing:2.65px;color:#111;transform:scaleY(1.05)">AR2267240</div>
<div class="a" style="left:1090px;top:223px;width:535.71px;height:18px;font-family:'Liberation Mono',monospace;font-size:15.6px;line-height:18px;transform:scaleX(1.12);transform-origin:0 0;letter-spacing:0.194px;font-weight:normal;color:#1a1a1a;-webkit-text-stroke:0.2px #1a1a1a;white-space:nowrap;">B 1315 REC 02267240&nbsp;&nbsp;10/28/91&nbsp;&nbsp;10:12&nbsp;&nbsp;&nbsp;&nbsp;$35.00&nbsp;&nbsp;&nbsp;&nbsp;1/007</div>
<div class="a" style="left:1090px;top:242px;width:535.71px;height:18px;font-family:'Liberation Mono',monospace;font-size:15.6px;line-height:18px;transform:scaleX(1.12);transform-origin:0 0;letter-spacing:0.194px;font-weight:normal;color:#1a1a1a;-webkit-text-stroke:0.2px #1a1a1a;white-space:nowrap;">F 0385 MARY ANN FEUERSTEIN CLERK &amp; RECORDER WELD CO, CO</div>
<div class="a" style="left:1247px;top:299px;width:178.57px;height:18px;font-family:'Liberation Mono',monospace;font-size:16px;line-height:18px;transform:scaleX(1.12);transform-origin:0 0;letter-spacing:-0.046px;font-weight:normal;color:#1b1b1b;-webkit-text-stroke:0.6px #1b1b1b;white-space:nowrap;">OIL AND GAS LEASE</div>
<div class="a" style="left:1402px;top:346px;width:292px;height:35px;background:#f0ea14"></div>
<div class="a" style="left:978px;top:366px;width:56px;height:27px;background:#f0ea14"></div>
<div class="a" style="left:987px;top:354px;width:357.14px;height:18px;font-family:'Liberation Mono',monospace;font-size:15.4px;line-height:18px;transform:scaleX(1.12);transform-origin:0 0;letter-spacing:-0.017px;font-weight:normal;color:#1b1b1b;-webkit-text-stroke:0.2px #1b1b1b;white-space:nowrap;"><b2>AGREEMENT,</b2></div>
<div class="a" style="left:1106px;top:354px;width:357.14px;height:18px;font-family:'Liberation Mono',monospace;font-size:15.4px;line-height:18px;transform:scaleX(1.12);transform-origin:0 0;letter-spacing:-0.017px;font-weight:normal;color:#1b1b1b;-webkit-text-stroke:0.2px #1b1b1b;white-space:nowrap;">made</div>
<div class="a" style="left:1161px;top:354px;width:357.14px;height:18px;font-family:'Liberation Mono',monospace;font-size:15.4px;line-height:18px;transform:scaleX(1.12);transform-origin:0 0;letter-spacing:-0.017px;font-weight:normal;color:#1b1b1b;-webkit-text-stroke:0.2px #1b1b1b;white-space:nowrap;">and</div>
<div class="a" style="left:1204px;top:354px;width:357.14px;height:18px;font-family:'Liberation Mono',monospace;font-size:15.4px;line-height:18px;transform:scaleX(1.12);transform-origin:0 0;letter-spacing:-0.017px;font-weight:normal;color:#1b1b1b;-webkit-text-stroke:0.2px #1b1b1b;white-space:nowrap;">entered</div>
<div class="a" style="left:1290px;top:354px;width:357.14px;height:18px;font-family:'Liberation Mono',monospace;font-size:15.4px;line-height:18px;transform:scaleX(1.12);transform-origin:0 0;letter-spacing:-0.017px;font-weight:normal;color:#1b1b1b;-webkit-text-stroke:0.2px #1b1b1b;white-space:nowrap;">into</div>
<div class="a" style="left:1345px;top:354px;width:357.14px;height:18px;font-family:'Liberation Mono',monospace;font-size:15.4px;line-height:18px;transform:scaleX(1.12);transform-origin:0 0;letter-spacing:-0.017px;font-weight:normal;color:#1b1b1b;-webkit-text-stroke:0.2px #1b1b1b;white-space:nowrap;">this</div>
<div class="a" style="left:1397px;top:369px;width:65px;height:1.5px;background:#222"></div>
<div class="a" style="left:1549px;top:369px;width:129px;height:1.5px;background:#222"></div>
<div class="a" style="left:1421px;top:352px;width:357.14px;height:18px;font-family:'Liberation Mono',monospace;font-size:15.4px;line-height:18px;transform:scaleX(1.12);transform-origin:0 0;letter-spacing:-0.017px;font-weight:normal;color:#1b1b1b;-webkit-text-stroke:0.2px #1b1b1b;white-space:nowrap;">18</div>
<div class="a" style="left:1473px;top:352px;width:357.14px;height:18px;font-family:'Liberation Mono',monospace;font-size:15.4px;line-height:18px;transform:scaleX(1.12);transform-origin:0 0;letter-spacing:-0.017px;font-weight:normal;color:#1b1b1b;-webkit-text-stroke:0.2px #1b1b1b;white-space:nowrap;">day</div>
<div class="a" style="left:1515px;top:352px;width:357.14px;height:18px;font-family:'Liberation Mono',monospace;font-size:15.4px;line-height:18px;transform:scaleX(1.12);transform-origin:0 0;letter-spacing:-0.017px;font-weight:normal;color:#1b1b1b;-webkit-text-stroke:0.2px #1b1b1b;white-space:nowrap;">of</div>
<div class="a" style="left:1557px;top:352px;width:357.14px;height:18px;font-family:'Liberation Mono',monospace;font-size:15.4px;line-height:18px;transform:scaleX(1.12);transform-origin:0 0;letter-spacing:-0.017px;font-weight:normal;color:#1b1b1b;-webkit-text-stroke:0.2px #1b1b1b;white-space:nowrap;">OCTOBER</div>
<div class="a" style="left:1682px;top:352px;width:357.14px;height:18px;font-family:'Liberation Mono',monospace;font-size:15.4px;line-height:18px;transform:scaleX(1.12);transform-origin:0 0;letter-spacing:-0.017px;font-weight:normal;color:#1b1b1b;-webkit-text-stroke:0.2px #1b1b1b;white-space:nowrap;">,</div>
<div class="a" style="left:987px;top:372px;width:357.14px;height:18px;font-family:'Liberation Mono',monospace;font-size:15.4px;line-height:18px;transform:scaleX(1.12);transform-origin:0 0;letter-spacing:-0.017px;font-weight:normal;color:#1b1b1b;-webkit-text-stroke:0.2px #1b1b1b;white-space:nowrap;">1991,</div>
<div class="a" style="left:1052px;top:372px;width:357.14px;height:18px;font-family:'Liberation Mono',monospace;font-size:15.4px;line-height:18px;transform:scaleX(1.12);transform-origin:0 0;letter-spacing:-0.017px;font-weight:normal;color:#1b1b1b;-webkit-text-stroke:0.2px #1b1b1b;white-space:nowrap;">by</div>
<div class="a" style="left:1084px;top:372px;width:357.14px;height:18px;font-family:'Liberation Mono',monospace;font-size:15.4px;line-height:18px;transform:scaleX(1.12);transform-origin:0 0;letter-spacing:-0.017px;font-weight:normal;color:#1b1b1b;-webkit-text-stroke:0.2px #1b1b1b;white-space:nowrap;">and</div>
<div class="a" style="left:1128px;top:372px;width:357.14px;height:18px;font-family:'Liberation Mono',monospace;font-size:15.4px;line-height:18px;transform:scaleX(1.12);transform-origin:0 0;letter-spacing:-0.017px;font-weight:normal;color:#1b1b1b;-webkit-text-stroke:0.2px #1b1b1b;white-space:nowrap;">between</div>
<div class="a" style="left:987px;top:408px;width:628.57px;height:18px;font-family:'Liberation Mono',monospace;font-size:15.4px;line-height:18px;transform:scaleX(1.12);transform-origin:0 0;letter-spacing:-0.017px;font-weight:normal;color:#1b1b1b;-webkit-text-stroke:0.2px #1b1b1b;white-space:nowrap;text-align:center;">FARMERS RESERVOIR AND IRRIGATION COMPANY</div>
<div class="a" style="left:987px;top:426px;width:628.57px;height:18px;font-family:'Liberation Mono',monospace;font-size:15.4px;line-height:18px;transform:scaleX(1.12);transform-origin:0 0;letter-spacing:-0.017px;font-weight:normal;color:#1b1b1b;-webkit-text-stroke:0.2px #1b1b1b;white-space:nowrap;text-align:center;">80 South 27th Avenue, Brighton, CO</div>
<div class="a" style="left:987px;top:444px;width:628.57px;height:18px;font-family:'Liberation Mono',monospace;font-size:15.4px;line-height:18px;transform:scaleX(1.12);transform-origin:0 0;letter-spacing:-0.017px;font-weight:normal;color:#1b1b1b;-webkit-text-stroke:0.2px #1b1b1b;white-space:nowrap;text-align:center;">a Colorado mutual ditch company</div>
<div class="a" style="left:987px;top:480px;width:628.57px;height:18px;font-family:'Liberation Mono',monospace;font-size:15.4px;line-height:18px;transform:scaleX(1.12);transform-origin:0 0;letter-spacing:-0.017px;font-weight:normal;color:#1b1b1b;-webkit-text-stroke:0.2px #1b1b1b;white-space:normal;text-align:justify;text-align-last:justify;">Party of the first part, hereinafter called Lessor and Snyder Oil</div>
<div class="a" style="left:987px;top:498px;width:628.57px;height:18px;font-family:'Liberation Mono',monospace;font-size:15.4px;line-height:18px;transform:scaleX(1.12);transform-origin:0 0;letter-spacing:-0.017px;font-weight:normal;color:#1b1b1b;-webkit-text-stroke:0.2px #1b1b1b;white-space:normal;text-align:justify;text-align-last:justify;">Corporation, 1625 Broadway, Suite 2200, Denver, Colorado 80202,</div>
<div class="a" style="left:987px;top:516px;width:500.00px;height:18px;font-family:'Liberation Mono',monospace;font-size:15.4px;line-height:18px;transform:scaleX(1.12);transform-origin:0 0;letter-spacing:-0.017px;font-weight:normal;color:#1b1b1b;-webkit-text-stroke:0.2px #1b1b1b;white-space:normal;text-align:justify;text-align-last:justify;">Party of the second part, hereinafter called Lessee.</div>
<div class="a" style="left:987px;top:552px;width:628.57px;height:18px;font-family:'Liberation Mono',monospace;font-size:15.4px;line-height:18px;transform:scaleX(1.12);transform-origin:0 0;letter-spacing:-0.017px;font-weight:normal;color:#1b1b1b;-webkit-text-stroke:0.2px #1b1b1b;white-space:normal;text-align:justify;text-align-last:justify;"><b2>WITNESSETH,</b2> That the said Lessor, for and in consideration of One</div>
<div class="a" style="left:987px;top:570px;width:628.57px;height:18px;font-family:'Liberation Mono',monospace;font-size:15.4px;line-height:18px;transform:scaleX(1.12);transform-origin:0 0;letter-spacing:-0.017px;font-weight:normal;color:#1b1b1b;-webkit-text-stroke:0.2px #1b1b1b;white-space:normal;text-align:justify;text-align-last:justify;">Dollar and other good and valuable considerations, receipt hereby</div>
<div class="a" style="left:987px;top:588px;width:628.57px;height:18px;font-family:'Liberation Mono',monospace;font-size:15.4px;line-height:18px;transform:scaleX(1.12);transform-origin:0 0;letter-spacing:-0.017px;font-weight:normal;color:#1b1b1b;-webkit-text-stroke:0.2px #1b1b1b;white-space:normal;text-align:justify;text-align-last:justify;">acknowledged, and of the covenants and agreements hereinafter</div>
<div class="a" style="left:987px;top:606px;width:628.57px;height:18px;font-family:'Liberation Mono',monospace;font-size:15.4px;line-height:18px;transform:scaleX(1.12);transform-origin:0 0;letter-spacing:-0.017px;font-weight:normal;color:#1b1b1b;-webkit-text-stroke:0.2px #1b1b1b;white-space:normal;text-align:justify;text-align-last:justify;">contained on the part of Lessee to be paid, kept and performed,</div>
<div class="a" style="left:987px;top:624px;width:628.57px;height:18px;font-family:'Liberation Mono',monospace;font-size:15.4px;line-height:18px;transform:scaleX(1.12);transform-origin:0 0;letter-spacing:-0.017px;font-weight:normal;color:#1b1b1b;-webkit-text-stroke:0.2px #1b1b1b;white-space:normal;text-align:justify;text-align-last:justify;">has granted, demised, leased and let, and by these presents does</div>
<div class="a" style="left:987px;top:642px;width:628.57px;height:18px;font-family:'Liberation Mono',monospace;font-size:15.4px;line-height:18px;transform:scaleX(1.12);transform-origin:0 0;letter-spacing:-0.017px;font-weight:normal;color:#1b1b1b;-webkit-text-stroke:0.2px #1b1b1b;white-space:normal;text-align:justify;text-align-last:justify;">grant, demise, lease, and let exclusively to the said Lessee, its</div>
<div class="a" style="left:987px;top:660px;width:628.57px;height:18px;font-family:'Liberation Mono',monospace;font-size:15.4px;line-height:18px;transform:scaleX(1.12);transform-origin:0 0;letter-spacing:-0.017px;font-weight:normal;color:#1b1b1b;-webkit-text-stroke:0.2px #1b1b1b;white-space:normal;text-align:justify;text-align-last:justify;">successors and assigns, for the sole and only purposes of surveying</div>
<div class="a" style="left:987px;top:678px;width:628.57px;height:18px;font-family:'Liberation Mono',monospace;font-size:15.4px;line-height:18px;transform:scaleX(1.12);transform-origin:0 0;letter-spacing:-0.017px;font-weight:normal;color:#1b1b1b;-webkit-text-stroke:0.2px #1b1b1b;white-space:normal;text-align:justify;text-align-last:justify;">and exploring by geological, geophysical, and all other methods,</div>
<div class="a" style="left:987px;top:696px;width:628.57px;height:18px;font-family:'Liberation Mono',monospace;font-size:15.4px;line-height:18px;transform:scaleX(1.12);transform-origin:0 0;letter-spacing:-0.017px;font-weight:normal;color:#1b1b1b;-webkit-text-stroke:0.2px #1b1b1b;white-space:normal;text-align:justify;text-align-last:justify;">operating for oil, gas and other hydrocarbons, that may be produced</div>
<div class="a" style="left:987px;top:714px;width:628.57px;height:18px;font-family:'Liberation Mono',monospace;font-size:15.4px;line-height:18px;transform:scaleX(1.12);transform-origin:0 0;letter-spacing:-0.017px;font-weight:normal;color:#1b1b1b;-webkit-text-stroke:0.2px #1b1b1b;white-space:normal;text-align:justify;text-align-last:justify;">from any well drilled by Lessee on the leased premises hereinafter</div>
<div class="a" style="left:987px;top:732px;width:628.57px;height:18px;font-family:'Liberation Mono',monospace;font-size:15.4px;line-height:18px;transform:scaleX(1.12);transform-origin:0 0;letter-spacing:-0.017px;font-weight:normal;color:#1b1b1b;-webkit-text-stroke:0.2px #1b1b1b;white-space:normal;text-align:justify;text-align-last:justify;">described, all those certain tracts of land together with any</div>
<div class="a" style="left:1021px;top:399px;width:592px;height:91px;background:#fff;border:2px solid #3a3a3a;box-shadow:1px 2px 3px rgba(0,0,0,.35);overflow:hidden"></div>
<div class="a" style="left:1023px;top:401px;width:4px;height:87px;background:#e6e6e6"></div>
<div class="a" style="left:1371px;top:423px;width:163px;height:29px;background:#f0ea14"></div>
<div class="a" style="left:1033px;top:442px;width:43px;height:28px;background:#f0ea14"></div>
<div class="a" style="left:1035px;top:401px;width:575px;height:87px;overflow:hidden"><div style="position:absolute;left:0;top:-12px;white-space:pre;font-family:'Liberation Mono',monospace;font-size:15px;line-height:20px;color:#111;">F 0385 MARY ANN FEUERSTEIN CLERK &amp; RECORDER WELD CO, CO&lt;\r&gt;&lt;\n&gt;
OIL AND GAS LEASE&lt;\r&gt;&lt;\n&gt;
AGREEMENT, made and entered into this 18 day of OCTOBER&lt;\r&gt;&lt;\n&gt;
1991, by and between&lt;\r&gt;&lt;\n&gt;
FARMERS RESERVOIR AND IRRIGATION COMPANY&lt;\r&gt;&lt;\n&gt;</div></div>
<div class="a" style="left:1023px;top:535px;width:589px;height:112px;background:#f7941e;box-shadow:0 3px 3px rgba(0,0,0,.45)"></div>
<div class="a" style="left:1023px;top:547px;width:585px;text-align:center;color:#fff;font-weight:bold;font-size:24px;line-height:28.2px;letter-spacing:-0.72px">The pattern doesn’t match because part of the<br>date is on a new line.&nbsp; The \r\n pairs signifying a<br>new line are at the end of every line.</div>
<div class="a" style="left:823px;top:741px;width:1084px;height:24px;background:#f0f0f0"></div>
<div class="a" style="left:824px;top:744px;width:64px;height:17px;border:1px solid #d4d4d4;border-right-color:#b8b8b8;border-bottom:none;background:#f0f0f0"></div>
<div class="t ui" style="left:828px;top:747px;">Scale: 56%</div>
<div class="a" style="left:890px;top:744px;width:96px;height:17px;border:1px solid #d4d4d4;border-right-color:#b8b8b8;border-bottom:none;background:#f0f0f0"></div>
<div class="t ui" style="left:894px;top:747px;">1908px x 2965px</div>
<div class="a" style="left:988px;top:744px;width:78px;height:17px;border:1px solid #d4d4d4;border-right-color:#b8b8b8;border-bottom:none;background:#f0f0f0"></div>
<div class="t ui" style="left:992px;top:747px;">9.54" x 14.83"</div>
<div class="a" style="left:1069px;top:744px;width:47px;height:17px;border:1px solid #d4d4d4;border-right-color:#b8b8b8;border-bottom:none;background:#f0f0f0"></div>
<div class="t ui" style="left:1073px;top:747px;">200 DPI</div>
<div class="a" style="left:1118px;top:744px;width:62px;height:17px;border:1px solid #d4d4d4;border-right-color:#b8b8b8;border-bottom:none;background:#f0f0f0"></div>
<div class="t ui" style="left:1122px;top:747px;">8-Bit Gray</div>
<div class="a" style="left:823px;top:765px;width:1084px;height:24px;background:linear-gradient(#fbfbfb,#efefef)"></div>
<div class="a" style="left:1906px;top:768px;width:1px;height:20px;background:#c0c0c0"></div>
<svg class="a" style="left:826px;top:769px" width="16" height="16"><rect x=".5" y=".5" width="15" height="15" fill="#8fcef5" stroke="#7a7a7a"/><rect x="1" y="11" width="14" height="4" fill="#58b040"/><circle cx="8" cy="7" r="4" fill="#2f9a2f"/><rect x="7.2" y="9" width="1.6" height="4" fill="#8b5a2b"/></svg>
<svg class="a" style="left:849px;top:769px" width="16" height="16"><rect x=".5" y=".5" width="15" height="15" fill="#cfcfcf" stroke="#7a7a7a"/><rect x="1" y="11" width="14" height="4" fill="#9a9a9a"/><circle cx="8" cy="7" r="4" fill="#7a7a7a"/><rect x="7.2" y="9" width="1.6" height="4" fill="#666"/></svg>
<svg class="a" style="left:872px;top:769px" width="16" height="16"><rect x=".5" y=".5" width="15" height="15" fill="#fff" stroke="#555"/><circle cx="7" cy="6" r="4" fill="#fff" stroke="#333" stroke-dasharray="1 1"/><path d="M1 12.5h14" stroke="#333"/><path d="M6 9v4" stroke="#333"/></svg>
<div class="a" style="left:895px;top:769px;width:1px;height:15px;background:#c8c8c8"></div>
<svg class="a" style="left:901px;top:769px" width="16" height="16"><rect x=".5" y=".5" width="15" height="15" fill="#e6e6e6" stroke="#bdbdbd"/><path d="M2 11l4-4 3 2 5-4" fill="none" stroke="#b0b0b0" stroke-width="1.2"/></svg>
<svg class="a" style="left:924px;top:769px" width="16" height="16"><path d="M3.5 0v12.5H16M0 3.5h12.5V16" fill="none" stroke="#b5b5b5" stroke-width="1.8"/><path d="M12 1l3-1" stroke="#b5b5b5"/></svg>
<svg class="a" style="left:947px;top:769px" width="15" height="16"><rect x=".5" y=".5" width="13" height="15" fill="#fff" stroke="#aaa"/><path d="M4 6a3.5 3.5 0 0 1 6.5-1M10.5 10a3.5 3.5 0 0 1-6.5 1" fill="none" stroke="#2f8ad8" stroke-width="1.6"/><path d="M9 3.5l2.5-.5v2.5zM5 12.5l-2.5.5v-2.5z" fill="#2f8ad8"/></svg>
<div class="a" style="left:970px;top:769px;width:1px;height:15px;background:#c8c8c8"></div>
<svg class="a" style="left:976px;top:770px" width="17" height="14"><path d="M15.5 12.5a7 6 0 0 0-10-8" fill="none" stroke="#b8b8b8" stroke-width="2.6"/><path d="M1.5 5.5l5-4.5 1 6z" fill="#b8b8b8"/></svg>
<div class="a" style="left:816px;top:801px;width:1098px;height:169px;background:#fff;border:1px solid #828790"></div>
<div class="a" style="left:817px;top:843px;width:1096px;height:1px;background:#f0f0f0"></div>
<div class="a" style="left:817px;top:860px;width:1096px;height:1px;background:#f0f0f0"></div>
<div class="a" style="left:817px;top:877px;width:1096px;height:1px;background:#f0f0f0"></div>
<div class="a" style="left:817px;top:894px;width:1096px;height:1px;background:#f0f0f0"></div>
<div class="a" style="left:817px;top:911px;width:1096px;height:1px;background:#f0f0f0"></div>
<div class="a" style="left:817px;top:928px;width:1096px;height:1px;background:#f0f0f0"></div>
<div class="a" style="left:817px;top:945px;width:1096px;height:1px;background:#f0f0f0"></div>
<div class="a" style="left:817px;top:962px;width:1096px;height:1px;background:#f0f0f0"></div>
<div class="a" style="left:1218px;top:804px;width:1px;height:23px;background:#e5e5e5"></div>
<div class="a" style="left:1218px;top:827px;width:1px;height:141px;background:#f0f0f0"></div>
<div class="a" style="left:1298px;top:804px;width:1px;height:23px;background:#e5e5e5"></div>
<div class="a" style="left:1298px;top:827px;width:1px;height:141px;background:#f0f0f0"></div>
<div class="a" style="left:1358px;top:804px;width:1px;height:23px;background:#e5e5e5"></div>
<div class="a" style="left:1358px;top:827px;width:1px;height:141px;background:#f0f0f0"></div>
<div class="a" style="left:1418px;top:804px;width:1px;height:23px;background:#e5e5e5"></div>
<div class="a" style="left:1418px;top:827px;width:1px;height:141px;background:#f0f0f0"></div>
<div class="a" style="left:1478px;top:804px;width:1px;height:23px;background:#e5e5e5"></div>
<div class="a" style="left:1478px;top:827px;width:1px;height:141px;background:#f0f0f0"></div>
<div class="t ui" style="left:824px;top:808px;">Results (0)</div>
<div class="t ui" style="left:1237px;top:808px;">Confidence</div>
<div class="t ui" style="left:1310px;top:808px;">Page No</div>
<div class="t ui" style="left:1386px;top:808px;">Index</div>
<div class="t ui" style="left:1439px;top:808px;">Length</div>
<div class="vd" style="left:36px;top:68px;height:251px"></div>
<div class="vd" style="left:55px;top:100px;height:27px"></div>
<div class="vd" style="left:74px;top:132px;height:123px"></div>
<div class="vd" style="left:93px;top:148px;height:43px"></div>
<div class="vd" style="left:112px;top:196px;height:43px"></div>
<div class="a" style="left:142px;top:230px;width:127px;height:16px;background:#e9e9e9"></div>
<svg class="a" style="left:13px;top:58px" width="9" height="9"><use href="#i-minus"/></svg>
<div class="hd" style="left:22px;top:62px;width:6px"></div>
<svg class="a" style="left:28px;top:54px" width="18" height="18"><use href="#i-db"/></svg>
<div class="t tree" style="left:49px;top:55px;">Consultant Unstructured Docs</div>
<svg class="a" style="left:32px;top:74px" width="9" height="9"><use href="#i-plus"/></svg>
<div class="hd" style="left:41px;top:78px;width:6px"></div>
<svg class="a" style="left:47px;top:70px" width="16" height="16"><use href="#i-fgear"/></svg>
<div class="t tree" style="left:68px;top:71px;">Batch Processing</div>
<svg class="a" style="left:32px;top:90px" width="9" height="9"><use href="#i-minus"/></svg>
<div class="hd" style="left:41px;top:94px;width:6px"></div>
<svg class="a" style="left:47px;top:86px" width="16" height="16"><use href="#i-fdb"/></svg>
<div class="t tree" style="left:68px;top:87px;">Content Models</div>
<svg class="a" style="left:51px;top:106px" width="9" height="9"><use href="#i-plus"/></svg>
<div class="hd" style="left:60px;top:110px;width:6px"></div>
<svg class="a" style="left:66px;top:102px" width="16" height="16"><use href="#i-fdb"/></svg>
<div class="t tree" style="left:87px;top:103px;">Examples</div>
<svg class="a" style="left:51px;top:122px" width="9" height="9"><use href="#i-minus"/></svg>
<div class="hd" style="left:60px;top:126px;width:6px"></div>
<svg class="a" style="left:66px;top:118px" width="16" height="16"><use href="#i-leases"/></svg>
<div class="t tree" style="left:87px;top:119px;">Leases</div>
<svg class="a" style="left:70px;top:138px" width="9" height="9"><use href="#i-minus"/></svg>
<div class="hd" style="left:79px;top:142px;width:6px"></div>
<svg class="a" style="left:85px;top:134px" width="16" height="16"><use href="#i-fopen"/></svg>
<div class="t tree" style="left:106px;top:135px;">(local resources)</div>
<svg class="a" style="left:89px;top:154px" width="9" height="9"><use href="#i-plus"/></svg>
<div class="hd" style="left:98px;top:158px;width:6px"></div>
<svg class="a" style="left:104px;top:150px" width="16" height="16"><use href="#i-fopen"/></svg>
<div class="t tree" style="left:125px;top:151px;">Key Extractors</div>
<svg class="a" style="left:89px;top:170px" width="9" height="9"><use href="#i-plus"/></svg>
<div class="hd" style="left:98px;top:174px;width:6px"></div>
<svg class="a" style="left:104px;top:166px" width="16" height="16"><use href="#i-fopen"/></svg>
<div class="t tree" style="left:125px;top:167px;">Value Extractors</div>
<svg class="a" style="left:89px;top:186px" width="9" height="9"><use href="#i-minus"/></svg>
<div class="hd" style="left:98px;top:190px;width:6px"></div>
<svg class="a" style="left:104px;top:186px" width="16" height="8"><use href="#i-date"/></svg>
<div class="t tree" style="left:125px;top:183px;">Date</div>
<div class="hd" style="left:112px;top:206px;width:11px"></div>
<svg class="a" style="left:123px;top:198px" width="16" height="16"><use href="#i-A"/></svg>
<div class="t tree" style="left:144px;top:199px;"><span style="letter-spacing:0.9px">#</span><span style="letter-spacing:0.9px">#</span>/<span style="letter-spacing:0.9px">#</span><span style="letter-spacing:0.9px">#</span>/<span style="letter-spacing:0.9px">#</span><span style="letter-spacing:0.9px">#</span><span style="letter-spacing:0.9px">#</span><span style="letter-spacing:0.9px">#</span></div>
<div class="hd" style="left:112px;top:222px;width:11px"></div>
<svg class="a" style="left:123px;top:214px" width="16" height="16"><use href="#i-A"/></svg>
<div class="t tree" style="left:144px;top:215px;">Month <span style="letter-spacing:0.9px">#</span><span style="letter-spacing:0.9px">#</span>, <span style="letter-spacing:0.9px">#</span><span style="letter-spacing:0.9px">#</span><span style="letter-spacing:0.9px">#</span><span style="letter-spacing:0.9px">#</span></div>
<div class="hd" style="left:112px;top:238px;width:11px"></div>
<svg class="a" style="left:123px;top:230px" width="16" height="16"><use href="#i-A"/></svg>
<div class="t tree" style="left:144px;top:231px;"><span style="letter-spacing:0.9px">#</span><span style="letter-spacing:0.9px">#</span>th day of Month, <span style="letter-spacing:0.9px">#</span><span style="letter-spacing:0.9px">#</span><span style="letter-spacing:0.9px">#</span><span style="letter-spacing:0.9px">#</span></div>
<div class="hd" style="left:74px;top:254px;width:11px"></div>
<svg class="a" style="left:85px;top:246px" width="16" height="16"><use href="#i-dm"/></svg>
<div class="t tree" style="left:106px;top:247px;">(data model)</div>
<svg class="a" style="left:32px;top:266px" width="9" height="9"><use href="#i-plus"/></svg>
<div class="hd" style="left:41px;top:270px;width:6px"></div>
<svg class="a" style="left:47px;top:262px" width="16" height="16"><use href="#i-flight"/></svg>
<div class="t tree" style="left:68px;top:263px;">Data Extraction</div>
<svg class="a" style="left:32px;top:282px" width="9" height="9"><use href="#i-plus"/></svg>
<div class="hd" style="left:41px;top:286px;width:6px"></div>
<svg class="a" style="left:47px;top:278px" width="16" height="16"><use href="#i-flock"/></svg>
<div class="t tree" style="left:68px;top:279px;">Global Resources</div>
<svg class="a" style="left:32px;top:298px" width="9" height="9"><use href="#i-plus"/></svg>
<div class="hd" style="left:41px;top:302px;width:6px"></div>
<svg class="a" style="left:47px;top:294px" width="16" height="16"><use href="#i-fwrench"/></svg>
<div class="t tree" style="left:68px;top:295px;">Infrastructure</div>
<div class="hd" style="left:36px;top:318px;width:11px"></div>
<svg class="a" style="left:47px;top:310px" width="16" height="16"><use href="#i-frep"/></svg>
<div class="t tree" style="left:68px;top:311px;">Reports</div>
</body></html>
